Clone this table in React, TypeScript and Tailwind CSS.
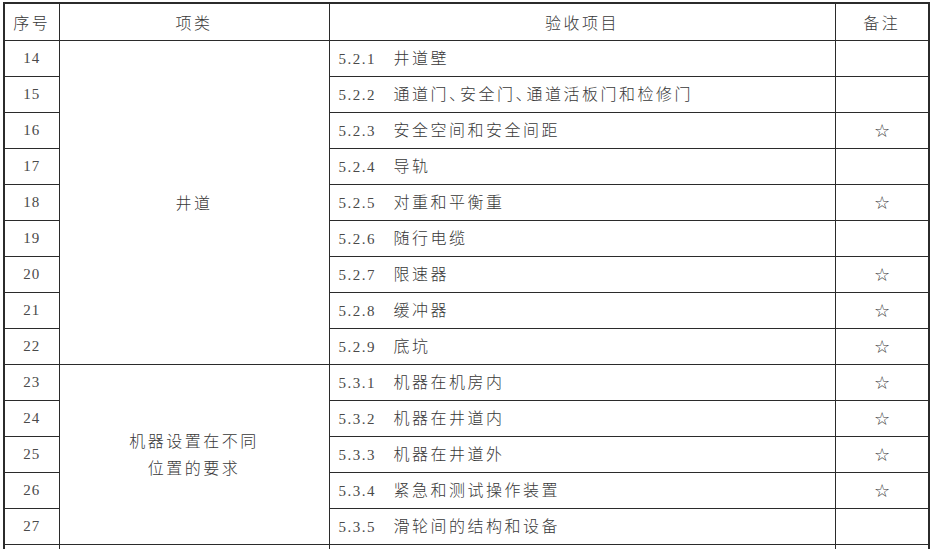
const rows = [
  { no: 14, code: "5.2.1", item: "井道壁", star: false },
  { no: 15, code: "5.2.2", item: "通道门、安全门、通道活板门和检修门", star: false },
  { no: 16, code: "5.2.3", item: "安全空间和安全间距", star: true },
  { no: 17, code: "5.2.4", item: "导轨", star: false },
  { no: 18, code: "5.2.5", item: "对重和平衡重", star: true },
  { no: 19, code: "5.2.6", item: "随行电缆", star: false },
  { no: 20, code: "5.2.7", item: "限速器", star: true },
  { no: 21, code: "5.2.8", item: "缓冲器", star: true },
  { no: 22, code: "5.2.9", item: "底坑", star: true },
  { no: 23, code: "5.3.1", item: "机器在机房内", star: true },
  { no: 24, code: "5.3.2", item: "机器在井道内", star: true },
  { no: 25, code: "5.3.3", item: "机器在井道外", star: true },
  { no: 26, code: "5.3.4", item: "紧急和测试操作装置", star: true },
  { no: 27, code: "5.3.5", item: "滑轮间的结构和设备", star: false },
];

const groups: Record<number, { span: number; label: string[] }> = {
  14: { span: 9, label: ["井道"] },
  23: { span: 5, label: ["机器设置在不同", "位置的要求"] },
};

const cell = "border border-[#2b2b2b] p-0 h-[36px] align-middle";
const cjk = "font-['Noto_Sans_CJK_SC',sans-serif] font-light text-[16px]";
const num = "font-['Liberation_Serif',serif] text-[15px] text-[#4a4a4a]";

// 、 set narrow, as in the printed standard
function Item({ text }: { text: string }) {
  const parts = text.split("、");
  return (
    <>
      {parts.map((p, i) => (
        <span key={i}>
          {p}
          {i < parts.length - 1 && <span className="tracking-[-5px]">、</span>}
        </span>
      ))}
    </>
  );
}

export default function App() {
  return (
    <div className="w-[931px] h-[549px] overflow-hidden bg-white pl-[3px] pt-[2px] text-[15px] text-[#383838]">
      <table className="border-collapse border-x-2 border-t-2 border-[#2b2b2b] table-fixed w-[925px]">
        <colgroup>
          <col className="w-[55px]" />
          <col className="w-[270px]" />
          <col className="w-[506px]" />
          <col className="w-[94px]" />
        </colgroup>
        <thead>
          <tr>
            <th className={`${cell} ${cjk} h-[37px] text-center tracking-[2.5px]`}>序号</th>
            <th className={`${cell} ${cjk} h-[37px] text-center tracking-[2.5px]`}>项类</th>
            <th className={`${cell} ${cjk} h-[37px] text-center tracking-[2.5px]`}>验收项目</th>
            <th className={`${cell} ${cjk} h-[37px] text-center tracking-[2.5px]`}>备注</th>
          </tr>
        </thead>
        <tbody>
          {rows.map((r) => (
            <tr key={r.no}>
              <td className={`${cell} ${num} text-center tracking-[1px]`}>{r.no}</td>
              {groups[r.no] && (
                <td rowSpan={groups[r.no].span} className={`${cell} ${cjk} text-center tracking-[2.5px] leading-[27px]`}>
                  {groups[r.no].label.map((l) => (
                    <div key={l}>{l}</div>
                  ))}
                </td>
              )}
              <td className={`${cell} pl-[9px]`}>
                <span className={`${num} inline-block w-[55px] tracking-[1.5px]`}>{r.code}</span>
                <span className={`${cjk} tracking-[2.5px]`}>
                  <Item text={r.item} />
                </span>
              </td>
              <td className={`${cell} text-center text-[18px] font-['DejaVu_Sans',sans-serif] font-extralight`}>
                {r.star ? "☆" : ""}
              </td>
            </tr>
          ))}
          <tr>
            <td className={cell}></td>
            <td className={cell}></td>
            <td className={cell}></td>
            <td className={cell}></td>
          </tr>
        </tbody>
      </table>
    </div>
  );
}
